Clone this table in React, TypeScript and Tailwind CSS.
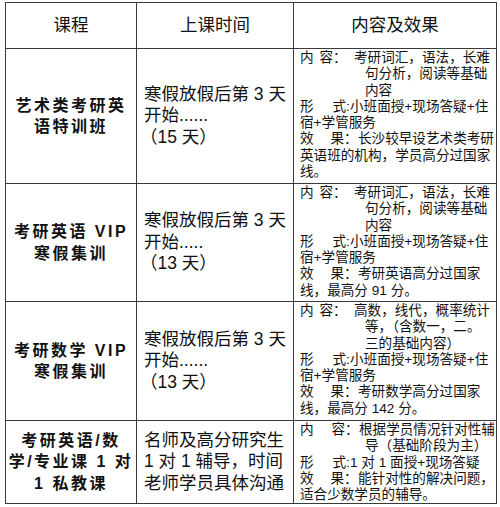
import React from "react"

const font = { fontFamily: '"Liberation Sans","Noto Sans CJK SC",sans-serif' }

type Line = { text: React.ReactNode; indent?: boolean }

function Pair({ a, b, w, colon, cw }: { a: string; b: string; w: string; colon: string; cw: string }) {
  return (
    <>
      <span className={`inline-flex justify-between ${w}`}>
        <span>{a}</span>
        <span>{b}</span>
      </span>
      <span className={`inline-block ${cw}`}>{colon}</span>
    </>
  )
}

const neiRong = <Pair a="内" b="容" w="w-[33px]" colon="：" cw="w-[21px]" />
const neiRongWide = <Pair a="内" b="容" w="w-[45px]" colon="：" cw="w-[14px]" />
const xingShi = <Pair a="形" b="式" w="w-[46px]" colon=":" cw="w-[4px]" />
const xiaoGuo = <Pair a="效" b="果" w="w-[44px]" colon="：" cw="w-[14px]" />

const rows: {
  course: string[]
  time: string[]
  detail: Line[]
  h: string
}[] = [
  {
    course: ["艺术类考研英", "语特训班"],
    time: ["寒假放假后第 3 天", "开始......", "（15 天）"],
    h: "h-[135px]",
    detail: [
      { text: <>{neiRong}考研词汇，语法，长难</> },
      { text: "句分析，阅读等基础", indent: true },
      { text: "内容", indent: true },
      { text: <>{xingShi}小班面授+现场答疑+住</> },
      { text: "宿+学管服务" },
      { text: <>{xiaoGuo}长沙较早设艺术类考研</> },
      { text: "英语班的机构，学员高分过国家" },
      { text: "线。" },
    ],
  },
  {
    course: ["考研英语 VIP", "寒假集训"],
    time: ["寒假放假后第 3 天", "开始.....", "（13 天）"],
    h: "h-[118px]",
    detail: [
      { text: <>{neiRong}考研词汇，语法，长难</> },
      { text: "句分析，阅读等基础", indent: true },
      { text: "内容", indent: true },
      { text: <>{xingShi}小班面授+现场答疑+住</> },
      { text: "宿+学管服务" },
      { text: <>{xiaoGuo}考研英语高分过国家</> },
      { text: "线，最高分 91 分。" },
    ],
  },
  {
    course: ["考研数学 VIP", "寒假集训"],
    time: ["寒假放假后第 3 天", "开始......", "（13 天）"],
    h: "h-[119px]",
    detail: [
      { text: <>{neiRong}高数，线代，概率统计</> },
      { text: "等，（含数一，二。", indent: true },
      { text: "三的基础内容）", indent: true },
      { text: <>{xingShi}小班面授+现场答疑+住</> },
      { text: "宿+学管服务" },
      { text: <>{xiaoGuo}考研数学高分过国家</> },
      { text: "线，最高分 142 分。" },
    ],
  },
  {
    course: ["考研英语/数", "学/专业课 1 对", "1 私教课"],
    time: ["名师及高分研究生", "1 对 1 辅导，时间", "老师学员具体沟通"],
    h: "h-[80px]",
    detail: [
      { text: <>{neiRongWide}根据学员情况针对性辅</> },
      { text: "导（基础阶段为主）", indent: true },
      { text: <>{xingShi}1 对 1 面授+现场答疑</> },
      { text: <>{xiaoGuo}能针对性的解决问题，</> },
      { text: "适合少数学员的辅导。" },
    ],
  },
]

export default function App() {
  return (
    <div className="w-[500px] h-[507px] bg-white pt-[2px] pl-[5px] text-[#111]" style={font}>
      <table className="table-fixed border-collapse w-[491px]">
        <colgroup>
          <col className="w-[131px]" />
          <col className="w-[157px]" />
          <col className="w-[203px]" />
        </colgroup>
        <thead>
          <tr className="h-[46px]">
            {["课程", "上课时间", "内容及效果"].map((t) => (
              <th key={t} className="border border-[#3a3a3a] text-center align-middle text-[17.5px] font-normal">
                {t}
              </th>
            ))}
          </tr>
        </thead>
        <tbody>
          {rows.map((r, i) => (
            <tr key={i} className={r.h}>
              <td className="border border-[#3a3a3a] text-center align-middle">
                <div className="text-[16px] leading-[21.5px] font-bold tracking-[2.5px]">
                  {r.course.map((c) => (
                    <div key={c} className="whitespace-nowrap">{c}</div>
                  ))}
                </div>
              </td>
              <td className="border border-[#3a3a3a] align-middle pl-[7px]">
                <div className="text-[17.5px] leading-[21.5px]">
                  {r.time.map((t) => (
                    <div key={t} className={`whitespace-nowrap ${t.startsWith("（") ? "-ml-[4px]" : ""}`}>{t}</div>
                  ))}
                </div>
              </td>
              <td className="border border-[#3a3a3a] align-top pl-[6px] pt-[1px]">
                <div className="text-[13.6px] leading-[16.3px]">
                  {r.detail.map((l, j) => (
                    <div key={j} className={`whitespace-nowrap ${l.indent ? "pl-[65px]" : ""}`}>
                      {l.text}
                    </div>
                  ))}
                </div>
              </td>
            </tr>
          ))}
        </tbody>
      </table>
    </div>
  )
}
